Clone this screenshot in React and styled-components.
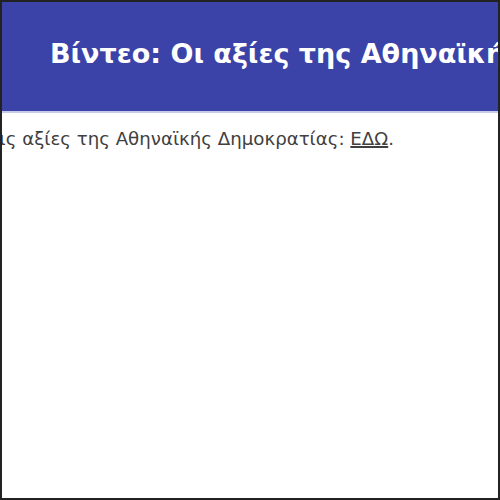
import React from "react";
import styled, { createGlobalStyle } from "styled-components";

/* page reset, the whole thing sits in a framed box */
const GlobalStyle = createGlobalStyle`
  html, body {
    margin: 0;
    padding: 0;
    background: #fff;
    overflow: hidden;
  }
`;

const Frame = styled.div`
  box-sizing: border-box;
  width: 500px;
  height: 500px;
  border: 2px solid #222;
  overflow: hidden;
  display: flex;
  flex-direction: column;
  font-family: "DejaVu Sans", "Noto Sans", sans-serif;
`;

const Header = styled.header`
  box-sizing: border-box;
  height: 111px;
  flex-shrink: 0;
  background: #3b43a8;
  border-bottom: 2px solid #c7cae9;
  display: flex;
  align-items: center;
  padding: 0 0 6px 48px;
  white-space: nowrap;
`;

const Title = styled.h1`
  margin: 0;
  color: #fff;
  font-size: 27px;
  font-weight: 700;
`;

/* the text is wider than the window, so it gets pushed out to the left */
const Row = styled.div`
  display: flex;
  justify-content: flex-end;
  padding: 15px 104px 0 0;
  white-space: nowrap;
`;

const Text = styled.p`
  margin: 0;
  color: #404040;
  font-size: 18.2px;
  flex-shrink: 0;
`;

const Link = styled.a`
  color: #404040;
  text-decoration: underline;
  text-decoration-thickness: 2px;
`;

export default function App() {
  return (
    <>
      <GlobalStyle />
      <Frame>
        <Header>
          <Title>Βίντεο: Οι αξίες της Αθηναϊκής Δημοκρατίας</Title>
        </Header>
        <Row>
          <Text>
            Παρακολουθήστε ένα σύντομο βίντεο για τις αξίες της Αθηναϊκής
            Δημοκρατίας: <Link href="#">ΕΔΩ</Link>.
          </Text>
        </Row>
      </Frame>
    </>
  );
}
